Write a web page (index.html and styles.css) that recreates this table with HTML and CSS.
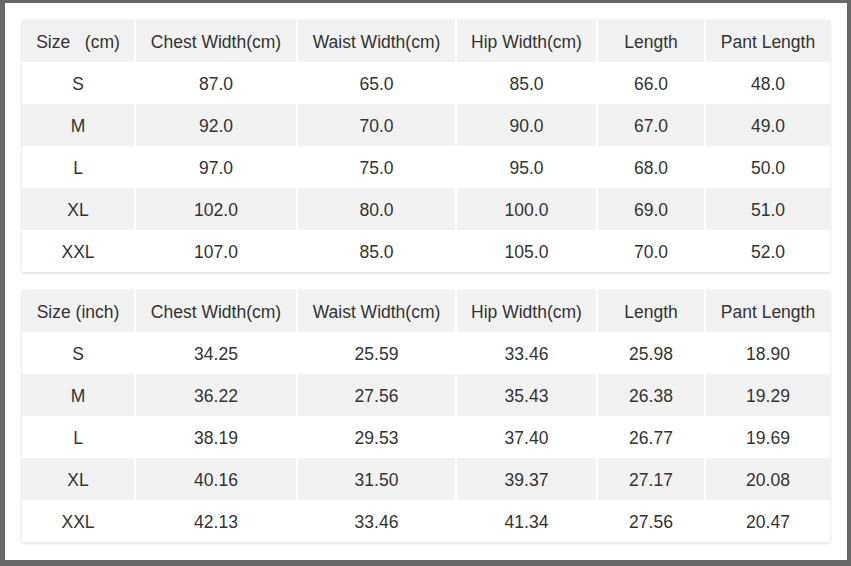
FILE: index.html
```html
<!DOCTYPE html>
<html>
<head>
<meta charset="utf-8">
<link rel="stylesheet" href="styles.css">
</head>
<body>
<div class="panel">
  <div class="chart">
    <div class="row head"><div>Size&nbsp;&nbsp;&nbsp;(cm)</div><div>Chest Width(cm)</div><div>Waist Width(cm)</div><div>Hip Width(cm)</div><div>Length</div><div>Pant Length</div></div>
    <div class="row"><div>S</div><div>87.0</div><div>65.0</div><div>85.0</div><div>66.0</div><div>48.0</div></div>
    <div class="row alt"><div>M</div><div>92.0</div><div>70.0</div><div>90.0</div><div>67.0</div><div>49.0</div></div>
    <div class="row"><div>L</div><div>97.0</div><div>75.0</div><div>95.0</div><div>68.0</div><div>50.0</div></div>
    <div class="row alt"><div>XL</div><div>102.0</div><div>80.0</div><div>100.0</div><div>69.0</div><div>51.0</div></div>
    <div class="row"><div>XXL</div><div>107.0</div><div>85.0</div><div>105.0</div><div>70.0</div><div>52.0</div></div>
  </div>
  <div class="chart">
    <div class="row head"><div>Size (inch)</div><div>Chest Width(cm)</div><div>Waist Width(cm)</div><div>Hip Width(cm)</div><div>Length</div><div>Pant Length</div></div>
    <div class="row"><div>S</div><div>34.25</div><div>25.59</div><div>33.46</div><div>25.98</div><div>18.90</div></div>
    <div class="row alt"><div>M</div><div>36.22</div><div>27.56</div><div>35.43</div><div>26.38</div><div>19.29</div></div>
    <div class="row"><div>L</div><div>38.19</div><div>29.53</div><div>37.40</div><div>26.77</div><div>19.69</div></div>
    <div class="row alt"><div>XL</div><div>40.16</div><div>31.50</div><div>39.37</div><div>27.17</div><div>20.08</div></div>
    <div class="row"><div>XXL</div><div>42.13</div><div>33.46</div><div>41.34</div><div>27.56</div><div>20.47</div></div>
  </div>
</div>
</body>
</html>
```
FILE: styles.css
```css
html, body {
  margin: 0;
  padding: 0;
  background: #686868;
}
body {
  width: 851px;
  height: 566px;
  overflow: hidden;
}
.panel {
  margin: 3px 4px 0 5px;
  height: 557px;
  box-sizing: border-box;
  background: #ffffff;
  padding: 17px;
  display: flex;
  flex-direction: column;
  gap: 18px;
}
.chart {
  width: 808px;
  background: #ffffff;
  box-shadow: 0 1px 3px rgba(0, 0, 0, 0.16);
  font-family: "Liberation Sans", Arial, sans-serif;
  font-size: 17.5px;
  color: #333333;
}
.row {
  display: grid;
  grid-template-columns: 112px 160px 157px 139px 106px 124px;
  column-gap: 2px;
  height: 42px;
}
.row > div {
  display: flex;
  align-items: center;
  justify-content: center;
  white-space: nowrap;
  padding-top: 2px;
}
.head > div,
.alt > div {
  background: #f2f2f2;
}
```
